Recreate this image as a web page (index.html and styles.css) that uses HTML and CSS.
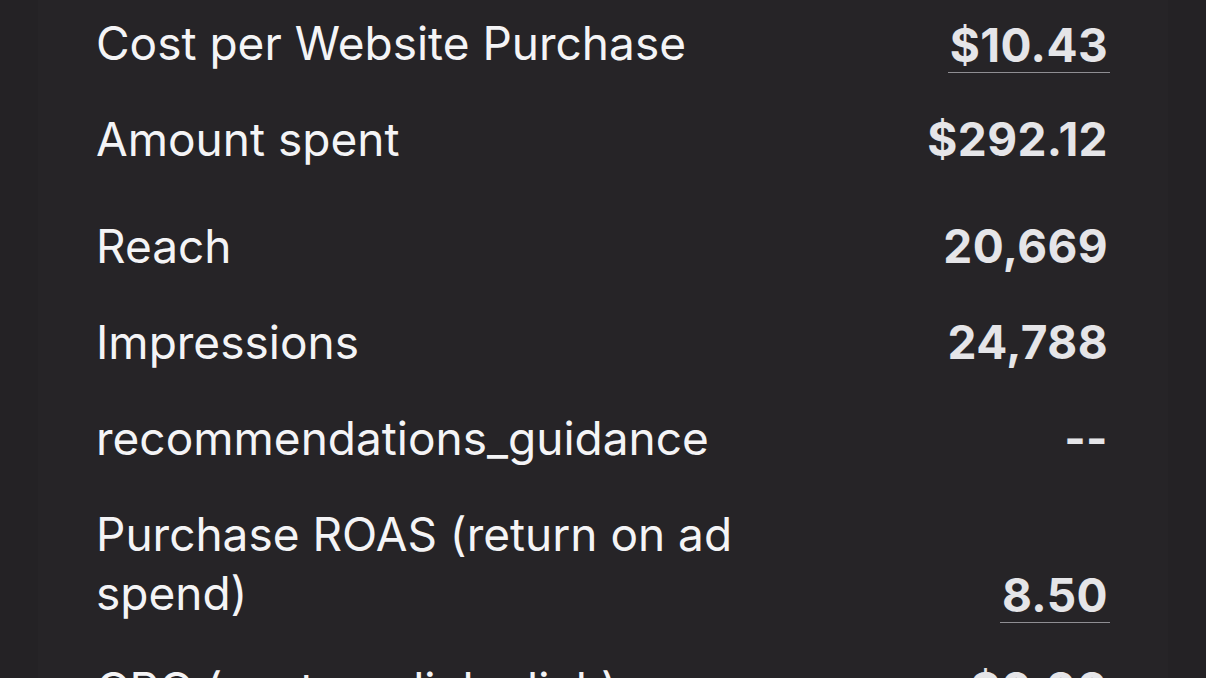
FILE: index.html
```html
<!DOCTYPE html>
<html lang="en">
<head>
<meta charset="utf-8">
<title>Ad metrics</title>
<link rel="stylesheet" href="styles.css">
</head>
<body>
<main class="card">
  <ul class="metrics">
    <li class="row">
      <span class="label">Cost per Website Purchase</span>
      <span class="value value--link">$10.43</span>
    </li>
    <li class="row row--spaced">
      <span class="label">Amount spent</span>
      <span class="value">$292.12</span>
    </li>
    <li class="row">
      <span class="label">Reach</span>
      <span class="value">20,669</span>
    </li>
    <li class="row">
      <span class="label">Impressions</span>
      <span class="value">24,788</span>
    </li>
    <li class="row">
      <span class="label">recommendations_guidance</span>
      <span class="value">--</span>
    </li>
    <li class="row">
      <span class="label label--wrap">Purchase ROAS (return on ad spend)</span>
      <span class="value value--link">8.50</span>
    </li>
    <li class="row">
      <span class="label">CPC (cost per link click)</span>
      <span class="value">$0.00</span>
    </li>
  </ul>
</main>
</body>
</html>
```

FILE: styles.css
```css
html, body {
  margin: 0;
  padding: 0;
  height: 100%;
  overflow: hidden;
  background: #242225;
}

body {
  font-family: Inter, "Noto Sans", "Liberation Sans", sans-serif;
  -webkit-font-smoothing: antialiased;
}

.card {
  margin: 0 38px;
  height: 100%;
  background: #262427;
}

.metrics {
  list-style: none;
  margin: 0;
  padding: 0 58px 0 58px;
  position: relative;
  top: -5px;
}

.row {
  display: flex;
  justify-content: space-between;
  align-items: flex-end;
  padding: 18.5px 0;
}

.row--spaced {
  padding-bottom: 30px;
}

.label {
  font-size: 46px;
  line-height: 59px;
  font-weight: 400;
  color: #f4f4f6;
}

.label--wrap {
  max-width: 660px;
}

.value {
  font-size: 46px;
  line-height: 59px;
  font-weight: 700;
  letter-spacing: 0.4px;
  color: #e5e5e8;
  padding: 0 2px;
}

.value--link {
  line-height: 54px;
  border-bottom: 1.5px solid #8f8e93;
}
```
